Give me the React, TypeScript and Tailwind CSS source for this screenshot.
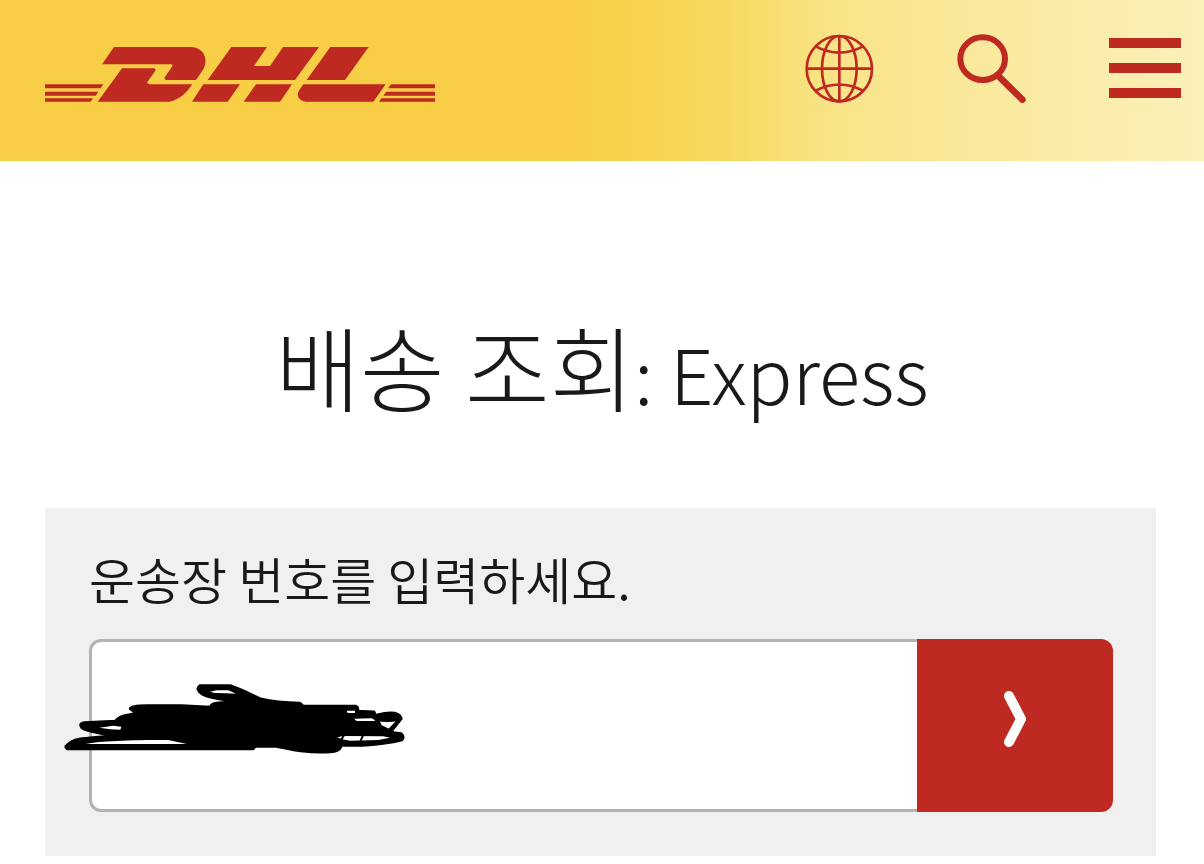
import { useState } from "react";

function Logo() {
    return (
        <svg viewBox="45 53 1170 165" className="w-[390px] h-[55px] fill-[#be2921]" aria-hidden="true">
            <path d="M252 53H482C518 53 537 86 521 118L498 152H408Q402 150 404 144L427 111Q429 105 424 105H216Z" />
            <path d="M276 117H372Q379 119 375 126L352 158Q351 164 358 165H487C470 190 450 210 420 217H203Z" />
            <path d="M604 53H711L672 110H720L759 53H867L795 152H533Z" />
            <path d="M520 165H630L593 217H486ZM678 165H786L750 217H641Z" />
            <path d="M901 53H1016L945 152H830Z" />
            <path d="M820 165H1067L1030 217H828C806 215 797 198 808 182Z" />
            <path d="M45 165H220L212 177H45ZM45 187H205L197 199H45ZM45 207H189L182 217H45Z" />
            <path d="M1083 165H1215V177H1074ZM1069 187H1215V199H1060ZM1054 207H1215V217H1047Z" />
        </svg>
    );
}

function GlobeIcon() {
    return (
        <svg viewBox="46 40 207 207" className="w-[69px] h-[69px] fill-none stroke-[#be2921] stroke-[8]">
            <circle cx="149" cy="144" r="98" />
            <ellipse cx="149" cy="144" rx="52" ry="98" />
            <path d="M149 44V244M49 144H249M78 77Q149 115 220 77M78 210Q149 173 220 210" />
        </svg>
    );
}

function SearchIcon() {
    return (
        <svg viewBox="502 40 207 207" className="w-[69px] h-[69px] fill-none stroke-[#be2921]">
            <ellipse cx="579" cy="114" rx="67" ry="64" strokeWidth="18" />
            <path d="M628 168L698 237" strokeWidth="20" strokeLinecap="round" />
        </svg>
    );
}

function MenuIcon() {
    return (
        <svg viewBox="0 0 72 69" className="w-[72px] h-[69px] fill-[#be2921]">
            <path d="M0 4H72V14H0ZM0 29H72V39H0ZM0 54H72V64H0Z" />
        </svg>
    );
}

function Scribble() {
    return (
        <svg
            viewBox="45 42 1020 210"
            className="absolute -left-6 top-[45px] w-[340px] h-[70px] pointer-events-none overflow-visible"
            strokeLinecap="round"
            strokeLinejoin="round"
            aria-hidden="true"
        >
            <path
                d="M241 116Q244 107 290 107H395L480 112Q485 102 500 100L562 94C520 88 480 86 458 73Q435 57 450 47H540C575 58 600 73 632 87Q680 98 750 100L760 109H918Q926 113 922 124L972 126L982 150L992 169L1030 188L1053 191Q1063 200 1056 209L1030 215Q950 229 873 225C873 239 862 244 840 245C770 249 730 239 680 229L615 229L610 236H52Q43 230 52 225C67 210 87 206 112 205L196 197C150 190 105 182 96 173Q86 161 102 158L196 154C208 138 232 135 262 131Z"
                className="stroke-black stroke-[9]"
            />
            <g className="fill-white">
                <path d="M480 65L500 61H535L558 71L530 70L495 69Z" />
                <path d="M148 173L190 167L214 170L211 179L180 178Z" />
                <path d="M107 222C150 213 230 210 355 210L410 222Z" />
                <path d="M862 202L880 198L1000 199L1020 203L985 210L900 212L876 208Z" />
                <path d="M890 122H915V129H893ZM912 146L965 145L980 153L920 153Z" />
            </g>
            <path d="M970 134Q1045 112 1057 142Q1050 162 975 154Z" />
            <path d="M1054 146L1027 180M1046 150L1018 180" className="fill-none stroke-black stroke-[8]" />
            <path d="M882 196L872 212M939 196L932 212" className="stroke-black stroke-[6]" />
        </svg>
    );
}

export default function App() {
    const [trackingNumber, setTrackingNumber] = useState("");

    return (
        <div className="bg-white text-[#191919] font-['Noto_Sans_CJK_KR',sans-serif]">
            <header className="h-[161px] pt-[34px] pl-[45px] pr-[23px] flex items-start justify-between bg-[linear-gradient(90deg,#f7ce46_48%,#f7d654_56%,#f8db67_62%,#f9e48a_70%,#faeaa0_84%,#faf0b9)]">
                <a href="#" aria-label="DHL" className="pt-[13px]">
                    <Logo />
                </a>
                <nav className="flex gap-[83px]">
                    <button type="button" aria-label="언어 선택"><GlobeIcon /></button>
                    <button type="button" aria-label="검색"><SearchIcon /></button>
                    <button type="button" aria-label="메뉴"><MenuIcon /></button>
                </nav>
            </header>

            <main>
                <h1 className="h-[347px] pt-[134px] text-center text-[92px] leading-[140px] font-light whitespace-nowrap">
                    배송 조회<span className="text-[76px]">: Express</span>
                </h1>

                <form
                    onSubmit={(e) => e.preventDefault()}
                    className="ml-[45px] mr-12 pt-[34px] pl-11 pr-[43px] pb-11 bg-[#f0f0f0]"
                >
                    <label htmlFor="tracking" className="block h-[97px] text-[50px] leading-[72px] font-[350]">
                        운송장 번호를 입력하세요.
                    </label>
                    <div className="relative flex h-[173px]">
                        <input
                            id="tracking"
                            type="text"
                            value={trackingNumber}
                            onChange={(e) => setTrackingNumber(e.target.value)}
                            className="min-w-0 flex-1 px-10 text-[50px] bg-white border-[3px] border-r-0 border-[#b3b3b3] rounded-l-xl outline-none"
                        />
                        <button
                            type="submit"
                            aria-label="조회"
                            className="w-[196px] pb-3.5 flex items-center justify-center bg-[#be2921] rounded-r-xl"
                        >
                            <svg viewBox="0 0 24 58" className="w-6 h-[58px] fill-none stroke-white">
                                <path d="M6 6L18 29L6 52" strokeWidth="10" strokeLinecap="round" strokeLinejoin="round" />
                            </svg>
                        </button>
                        <Scribble />
                    </div>
                </form>
            </main>
        </div>
    );
}
